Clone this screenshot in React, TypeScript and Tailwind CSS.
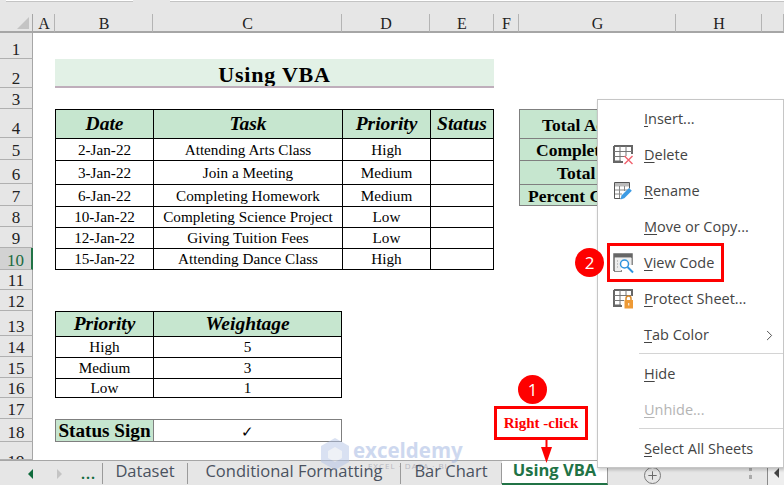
import React from "react";
import { ChevronRight, Plus } from "lucide-react";

const serif = "font-['Liberation_Serif',serif]";
const sans = "font-['Open_Sans',sans-serif]";

const columns = [
  ["A", 22],
  ["B", 98],
  ["C", 189],
  ["D", 88],
  ["E", 64],
  ["F", 25],
  ["G", 157],
  ["H", 86],
  ["", 22],
] as const;

const rowHeights = [26, 29, 21, 29, 22, 24, 22, 21, 21, 22, 20, 21, 25, 21, 21, 20, 21, 23, 18];

const tasks = [
  ["2-Jan-22", "Attending Arts Class", "High"],
  ["3-Jan-22", "Join a Meeting", "Medium"],
  ["6-Jan-22", "Completing Homework", "Medium"],
  ["10-Jan-22", "Completing Science Project", "Low"],
  ["12-Jan-22", "Giving Tuition Fees", "Low"],
  ["15-Jan-22", "Attending Dance Class", "High"],
];

const weights = [
  ["High", "5"],
  ["Medium", "3"],
  ["Low", "1"],
];

// only what shows left of the context menu
const summary = [
  ["Total Ac", "pl-[22px]"],
  ["Complet", "pl-[16px]"],
  ["Total", "pl-[37px]"],
  ["Percent C", "pl-[8px]"],
];

function DeleteIcon() {
  return (
    <svg width="21" height="20" viewBox="0 0 21 20" fill="none">
      <path d="M1 1h18v8M1 1v16h9" stroke="#666" strokeWidth="2" />
      <path d="M1 6.500h18M1 11.500h12M7 1v15M13 1v10" stroke="#777" />
      <path d="M1 15.500h7l-2 2.500H1z" fill="#666" />
      <path d="M11.500 11l8 8M19.500 11l-8 8" stroke="#f0616d" strokeWidth="1.400" />
    </svg>
  );
}

function RenameIcon() {
  return (
    <svg width="18" height="18" viewBox="0 0 18 18" fill="none">
      <path d="M.5 16.500V.5h15v6" stroke="#555" />
      <path d="M.5 16.500h6" stroke="#555" />
      <path d="M1 1h14v3.500H1z" fill="#bbb" />
      <path d="M1 8h13M1 12h7M5.500 4v12M10.500 4v5" stroke="#888" />
      <path d="M6.500 17.500l1-4 7.500-7.500 2.800 2.800-7.500 7.500z" fill="#3d9be4" />
    </svg>
  );
}

function ViewCodeIcon() {
  return (
    <svg width="21" height="21" viewBox="0 0 21 21" fill="none">
      <path d="M1 18V1h18v11M1 18h8" stroke="#666" strokeWidth="1.500" />
      <path d="M1 1h18v3.500H1z" fill="#666" />
      <path d="M2 5h16.500v7H15a5 5 0 0 0-7 6H2z" fill="#eee" />
      <path d="M4 8h2M4 11h2M4 14h2" stroke="#999" strokeDasharray="1 1" />
      <circle cx="11.500" cy="11" r="4" fill="#fff" stroke="#2f93dd" strokeWidth="1.500" />
      <path d="M14.500 14l5.500 5.500" stroke="#2f93dd" strokeWidth="2" />
    </svg>
  );
}

function ProtectIcon() {
  return (
    <svg width="21" height="20" viewBox="0 0 21 20" fill="none">
      <path d="M1 1h18v6M1 1v16h8" stroke="#666" strokeWidth="2" />
      <path d="M1 6.500h18M1 11.500h10M7 1v15M13 1v6" stroke="#777" />
      <path d="M1 15.500h7l-2 2.500H1z" fill="#666" />
      <path d="M13 11V9.500a2.500 2.500 0 0 1 5 0V11" stroke="#d98a2b" strokeWidth="1.500" />
      <path d="M11.500 11h8.500v8.500h-8.500z" fill="#ee9a35" />
      <path d="M15.750 14v2.500" stroke="#fff" />
    </svg>
  );
}

const menuItems: {
  key: string;
  rest: string;
  icon?: React.ReactNode;
  muted?: boolean;
  arrow?: boolean;
  sep?: string;
  h?: string;
}[] = [
  { key: "I", rest: "nsert..." },
  { key: "D", rest: "elete", icon: <DeleteIcon /> },
  { key: "R", rest: "ename", icon: <RenameIcon /> },
  { key: "M", rest: "ove or Copy..." },
  { key: "V", rest: "iew Code", icon: <ViewCodeIcon /> },
  { key: "P", rest: "rotect Sheet...", icon: <ProtectIcon /> },
  { key: "T", rest: "ab Color", arrow: true, sep: "mb-[1px]" },
  { key: "H", rest: "ide", h: "h-[37px]" },
  { key: "U", rest: "nhide...", muted: true, sep: "mb-[2px]" },
  { key: "S", rest: "elect All Sheets" },
];

function ContextMenu() {
  return (
    <div className={`absolute left-[597px] top-[99px] w-[187px] h-[369px] pt-[1px] bg-white border border-[#c6c6c6] shadow-[1px_2px_3px_rgba(0,0,0,0.2)] ${sans}`}>
      {menuItems.map((item) => (
        <div key={item.key}>
          <div className={`flex items-center ${item.h ?? "h-9"} text-[14.5px] ${item.muted ? "text-[#b4b4b4]" : "text-[#444]"}`}>
            <div className="w-[46px] flex justify-center pl-[4px]">{item.icon}</div>
            <span>
              <span className="underline underline-offset-2">{item.key}</span>
              {item.rest}
            </span>
            {item.arrow && <ChevronRight className="ml-auto mr-[5px] text-[#444]" size={17} strokeWidth={1.300} />}
          </div>
          {item.sep && <div className={`h-px bg-[#d4d4d4] ml-[41px] ${item.sep}`} />}
        </div>
      ))}
    </div>
  );
}

function Badge({ n, className }: { n: string; className: string }) {
  return (
    <div className={`absolute w-[29px] h-[29px] rounded-full bg-[#fe0000] text-white text-[17px] flex items-center justify-center ${sans} ${className}`}>
      {n}
    </div>
  );
}

function Watermark() {
  return (
    <div className="absolute left-[321px] top-[438px] flex items-start gap-[4px] opacity-50">
      <svg width="28" height="32" viewBox="0 0 28 32">
        <path d="M14 0l14 8v16l-14 8-14-8V8z" fill="#b4c4e6" />
        <path d="M14 9l7 4v7l-7 4-7-4v-7z" fill="#dfe4ee" />
      </svg>
      <div className={`flex flex-col items-center leading-none ${sans} text-[#9db2e0]`}>
        <span className="text-[20.500px] font-bold leading-[24px]">exceldemy</span>
        <span className="text-[8px] tracking-[1px] text-[#889]">EXCEL · DATA · BI</span>
      </div>
    </div>
  );
}

function Cell({ row, className, children }: { row: number; className: string; children?: React.ReactNode }) {
  return (
    <div
      style={{ gridRow: row + 1 }}
      className={`flex items-center justify-center whitespace-nowrap overflow-hidden text-black ${serif} ${className}`}
    >
      {children}
    </div>
  );
}

function Sheet() {
  const th = "bg-[#c6e6cf] border-black font-bold italic text-[19.500px] border-t border-l";
  const td = "border-black text-[15.200px] pt-[1px] border-t border-l";
  const side = "bg-[#c6e6cf] border-[#7f7f7f] font-bold border-t border-l";

  return (
    <div
      className="grid bg-white h-[446px] overflow-hidden"
      style={{
        gridTemplateColumns: "33px " + columns.map((c) => c[1] + "px").join(" "),
        gridTemplateRows: "19px " + rowHeights.map((h) => h + "px").join(" "),
      }}
    >
      {/* corner and column letters */}
      <div className="relative row-start-1 col-start-1 bg-[#e6e6e6] border-b-2 border-r border-[#a6a6a6]">
        <div className="absolute right-[3px] bottom-[2px] w-0 h-0 border-l-[12px] border-b-[12px] border-l-transparent border-b-[#c4c4c4]" />
      </div>
      {columns.map((c) => (
        <div
          key={c[0]}
          className={`row-start-1 flex items-center justify-center pt-[3px] pl-[1px] bg-[#e6e6e6] border-b-2 border-r border-b-[#a6a6a6] border-r-[#b4b4b4] text-[16px] leading-none text-[#222] ${serif}`}
        >
          {c[0]}
        </div>
      ))}

      {/* row numbers, the last one is cut by the tab bar */}
      {rowHeights.map((_, i) => (
        <div
          key={i}
          style={{ gridRow: i + 2 }}
          className={`col-start-1 flex justify-center border-b border-b-[#b0b0b0] text-[17px] leading-[16px] overflow-hidden ${serif} ${
            i === 18 ? "items-start pt-[12px]" : "items-end"
          } ${
            i === 9
              ? "bg-[#d2d2d2] text-[#1b6b41] border-r-2 border-r-[#217346]"
              : "bg-[#e6e6e6] text-[#222] border-r border-r-[#a6a6a6]"
          }`}
        >
          {i + 1}
        </div>
      ))}

      {/* title */}
      <Cell row={2} className="col-start-3 col-end-7 pt-[3px] bg-[#e2f1e6] border-b-2 border-[#bfaebb] font-bold text-[22px] text-[#222] tracking-[0.800px]">
        Using VBA
      </Cell>

      {/* task table */}
      <Cell row={4} className={`${th} col-start-3`}>Date</Cell>
      <Cell row={4} className={`${th} col-start-4`}>Task</Cell>
      <Cell row={4} className={`${th} col-start-5`}>Priority</Cell>
      <Cell row={4} className={`${th} col-start-6 border-r`}>Status</Cell>
      {tasks.map((t, i) => {
        const last = i === tasks.length - 1 ? "border-b" : "";
        return (
          <React.Fragment key={t[0]}>
            <Cell row={i + 5} className={`${td} ${last} col-start-3`}>{t[0]}</Cell>
            <Cell row={i + 5} className={`${td} ${last} col-start-4`}>{t[1]}</Cell>
            <Cell row={i + 5} className={`${td} ${last} col-start-5`}>{t[2]}</Cell>
            <Cell row={i + 5} className={`${td} ${last} col-start-6 border-r`} />
          </React.Fragment>
        );
      })}

      {/* summary block, mostly behind the menu */}
      {summary.map((s, i) => (
        <Cell key={s[0]} row={i + 4} className={`${side} ${s[1]} !justify-start col-start-8 text-[17.500px] pt-[2px] ${i === 3 ? "border-b" : ""}`}>
          {s[0]}
        </Cell>
      ))}

      {/* weightage table */}
      <Cell row={13} className={`${th} col-start-3`}>Priority</Cell>
      <Cell row={13} className={`${th} col-start-4 border-r`}>Weightage</Cell>
      {weights.map((w, i) => {
        const last = i === weights.length - 1 ? "border-b" : "";
        return (
          <React.Fragment key={w[0]}>
            <Cell row={i + 14} className={`${td} ${last} col-start-3`}>{w[0]}</Cell>
            <Cell row={i + 14} className={`${td} ${last} col-start-4 border-r`}>{w[1]}</Cell>
          </React.Fragment>
        );
      })}

      {/* status sign */}
      <Cell row={18} className={`${side} border-b col-start-3 text-[19.200px] pt-[2px]`}>Status Sign</Cell>
      <Cell row={18} className="col-start-4 pt-[3px] border border-[#7f7f7f] text-[15px] font-['DejaVu_Sans',sans-serif]">✓</Cell>
    </div>
  );
}

function TabBar() {
  const tab = "flex items-center justify-center pb-[4px] border-r border-[#9a9a9a] h-[21px] mt-[2px]";
  return (
    <div className={`relative flex h-[25px] bg-[#e6e6e6] border-t border-[#a6a6a6] text-[16.500px] text-[#4a5260] ${sans}`}>
      <div className="w-[103px] flex items-center border-r border-[#9a9a9a] h-[21px] mt-[2px] pl-[28px]">
        <svg width="5" height="10" viewBox="0 0 5 10"><path d="M5 0v10L0 5z" fill="#0f6b3c" /></svg>
        <svg className="ml-[24px]" width="5" height="10" viewBox="0 0 5 10"><path d="M0 0v10l5-5z" fill="#c4c4c4" /></svg>
        <span className="ml-[19px] text-[#0f6b3c] font-bold leading-none tracking-[1px] text-[14px]">...</span>
      </div>
      <div className={`${tab} w-[85px]`}>Dataset</div>
      <div className={`${tab} w-[213px]`}>Conditional Formatting</div>
      <div className={`${tab} w-[101px]`}>Bar Chart</div>
      <div className="w-[106px] h-[24px] pb-[3px] flex items-center justify-center bg-white border-r border-b-2 border-[#9a9a9a] border-b-[#217346] font-bold text-[#217346]">
        Using VBA
      </div>
      <div className="ml-[36px] mt-[6px] w-[17px] h-[17px] rounded-full border border-[#7a7a7a] flex items-center justify-center">
        <Plus size={13} strokeWidth={1.800} className="text-[#666]" />
      </div>
      <div className="ml-auto flex items-center">
        <div className="w-[3px] h-[12px] mr-[15px] border-l-[3px] border-dotted border-[#aaa]" />
        <div className="w-[17px] h-[24px] bg-[#eee] border-l border-[#8a8a8a] flex items-center justify-center">
          <svg width="5" height="10" viewBox="0 0 5 10"><path d="M5 0v10L0 5z" fill="#444" /></svg>
        </div>
      </div>
    </div>
  );
}

export default function App() {
  return (
    <div className="relative w-[784px] h-[485px] overflow-hidden bg-[#e6e6e6]">
      {/* strip of the formula bar above the column letters */}
      <div className="flex h-[14px] items-start">
        <div className="ml-[6px] w-[127px] h-[2px] bg-white border-b border-[#c4c4c4]" />
        <div className="ml-[37px] flex-1 h-[2px] bg-white border-b border-[#c4c4c4]" />
      </div>
      <Sheet />
      <TabBar />
      <Watermark />
      <ContextMenu />

      {/* annotations */}
      <Badge n="1" className="left-[518px] top-[375px]" />
      <Badge n="2" className="left-[575px] top-[248px]" />
      <div className="absolute left-[607px] top-[243px] w-[117px] h-[39px] border-[3px] border-[#fe0000]" />
      <div className={`absolute left-[494px] top-[406px] w-[94px] h-[34px] border-[3px] border-[#fe0000] bg-white text-[#fe0000] font-bold text-[15px] flex items-center justify-center whitespace-nowrap ${serif}`}>
        Right -click
      </div>
      <svg className="absolute left-[540px] top-[440px]" width="13" height="24" viewBox="0 0 13 24">
        <path d="M5.500 0h2v8h-2z" fill="#fe0000" />
        <path d="M1 7h11l-5.500 16z" fill="#fe0000" />
      </svg>
    </div>
  );
}
